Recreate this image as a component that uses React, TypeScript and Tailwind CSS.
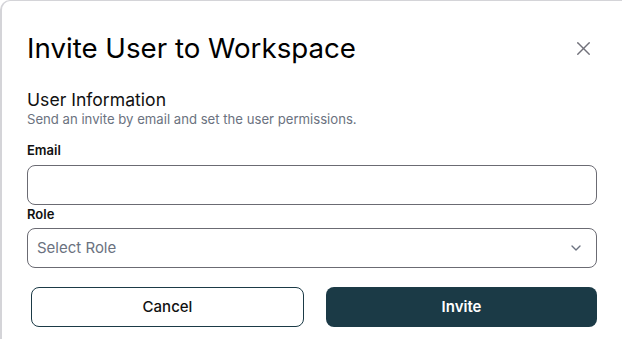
import { X, ChevronDown } from "lucide-react";

export default function App() {
  return (
    <div className="w-[622px] h-[339px] overflow-hidden bg-white" style={{ fontFamily: "Inter, 'Noto Sans', sans-serif" }}>
      <div className="w-[640px] h-[360px] rounded-tl-[10px] border-l-2 border-t border-[#d4d4d8] bg-white pl-[25px] pr-[43px]">
        <div className="flex items-center justify-between pt-[29px]">
          <h1 className="text-[27.7px] leading-[36px] text-black">Invite User to Workspace</h1>
          <X className="mr-[2px] h-[23px] w-[23px] text-[#71717a]" strokeWidth={1.4} />
        </div>
        <div className="mt-[22px]">
          <h2 className="text-[17.6px] leading-[23px] text-[#111]">User Information</h2>
          <p className="text-[13.15px] leading-[16px] text-[#6b7280]">Send an invite by email and set the user permissions.</p>
        </div>
        <div className="mt-[14px] flex flex-col">
          <label className="text-[13px] font-semibold leading-[18px] text-[#111]">Email</label>
          <input className="mt-[6px] h-[40px] w-full rounded-[8px] border border-[#6b6b73] px-[10px] outline-none" />
          <label className="text-[13px] font-semibold leading-[18px] text-[#111]">Role</label>
          <div className="mt-[5px] flex h-[40px] w-full items-center justify-between rounded-[8px] border border-[#6b6b73] pl-[9px] pr-[12px]">
            <span className="text-[15px] text-[#6b7280]">Select Role</span>
            <ChevronDown className="h-[16px] w-[16px] text-[#6b7280]" strokeWidth={2} />
          </div>
        </div>
        <div className="mt-[19px] flex gap-[22px] pl-[4px]">
          <button className="h-[40px] flex-1 rounded-[8px] border border-[#1b3a46] bg-white text-[15px] font-medium text-[#111]">Cancel</button>
          <button className="h-[40px] flex-1 rounded-[8px] bg-[#1b3a46] text-[15px] font-semibold text-white">Invite</button>
        </div>
      </div>
    </div>
  );
}
